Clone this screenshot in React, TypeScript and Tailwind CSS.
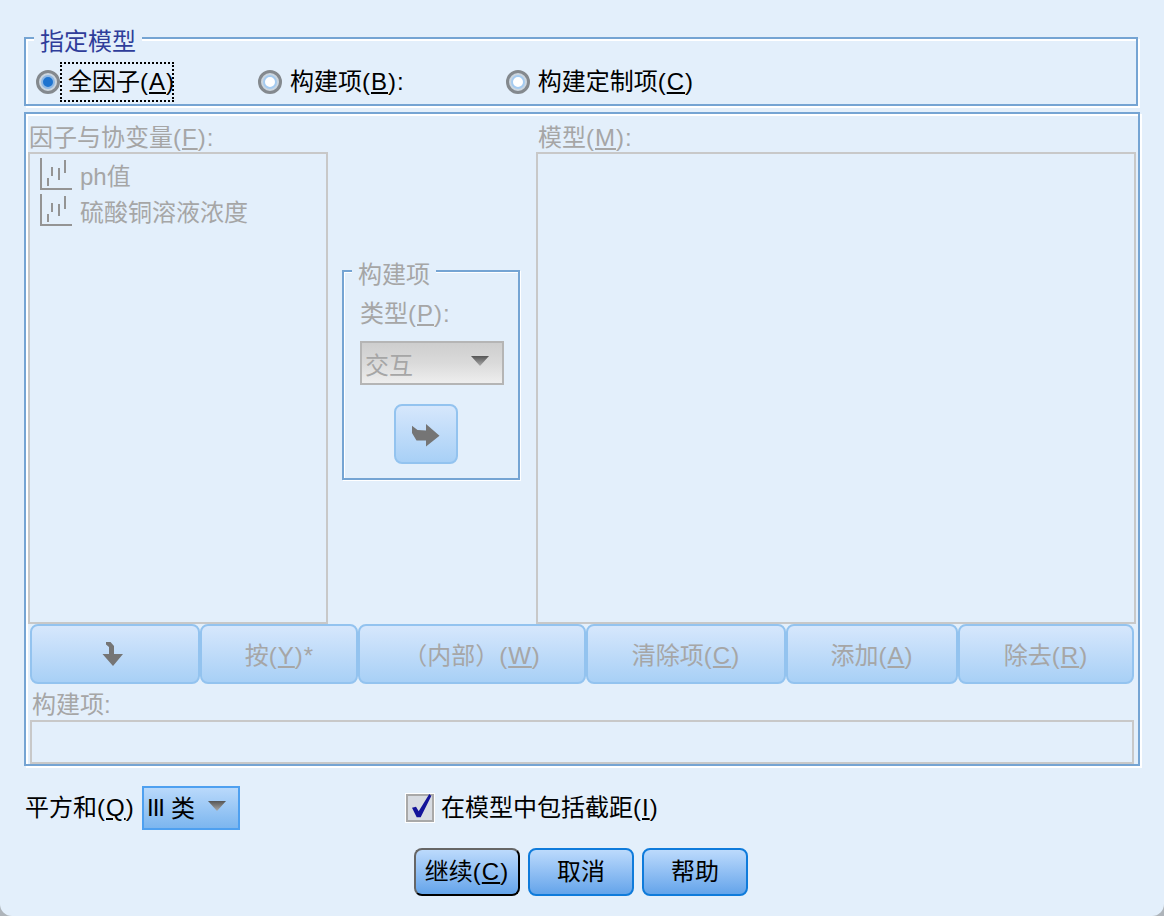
import type { ReactNode } from 'react';

const FONT = "font-['Liberation_Sans','Noto_Sans_CJK_SC',sans-serif]";

// mnemonic label, e.g. 全因子(A)
const Mn = ({ k }: { k: string }) => (
  <span className="tracking-[1px]">
    (<u>{k}</u>)
  </span>
);

const Radio = ({ checked }: { checked?: boolean }) => (
  <div className="flex h-6 w-6 shrink-0 items-center justify-center rounded-full border-[3px] border-[#84898e] bg-[#ccd6df]">
    <div className={`h-[14px] w-[14px] rounded-full border-2 ${checked ? 'border-[#8fb8e4] bg-[#1f74cf]' : 'border-[#a5cbf0] bg-white'}`} />
  </div>
);

const ScaleIcon = () => (
  <svg width="32" height="32" viewBox="0 0 32 32" className="shrink-0" fill="#949494">
    <rect x="0" y="0" width="2" height="32" />
    <rect x="0" y="30" width="32" height="2" />
    <rect x="7" y="20" width="2" height="8" />
    <rect x="11" y="9" width="2" height="9" />
    <rect x="18" y="10" width="2" height="12" />
    <rect x="24" y="2" width="2" height="13" />
  </svg>
);

const ArrowRight = () => (
  <svg width="36" height="36" viewBox="0 0 36 36" fill="#757575" className="mt-2">
    <path d="M4 5.7 L9.5 10 L18 10.5 V4 L31.5 15.7 L18 26.5 V20.5 H8.5 L4 13 Z" />
  </svg>
);

const ArrowDown = () => (
  <svg width="36" height="36" viewBox="0 0 36 36" fill="#757575" className="-ml-[2px]">
    <path d="M10 6 H14.5 L18 10 V18 H27 L17 30 L6.5 18 H13 V11 L10 8.5 Z" />
  </svg>
);

const Caret = () => (
  <svg width="18" height="10" viewBox="0 0 18 10">
    <defs>
      <linearGradient id="caret" x1="0" y1="0" x2="0" y2="1">
        <stop offset="0" stopColor="#555" />
        <stop offset="1" stopColor="#aaa" />
      </linearGradient>
    </defs>
    <path d="M0 0 H18 L9 10 Z" fill="url(#caret)" />
  </svg>
);

const ToolButton = ({ w, children }: { w: string; children: ReactNode }) => (
  <div className={`flex h-[60px] items-center justify-center rounded-lg border-2 border-[#93c3ef] bg-linear-to-b from-[#d6e7fc] to-[#a8d0f6] text-[#a6a6a6] ${w}`}>
    {children}
  </div>
);

const DialogButton = ({ children, primary }: { children: ReactNode; primary?: boolean }) => (
  <div
    className={`flex h-12 w-[106px] items-center justify-center rounded-lg border-2 bg-linear-to-b from-[#bcdafc] to-[#64a4ea] ${
      primary ? 'border-[#666] border-b-black border-r-black' : 'border-[#0f7bdb]'
    }`}
  >
    {children}
  </div>
);

export default function App() {
  return (
    <div className={`h-[916px] w-[1164px] overflow-hidden bg-[#aeb4ba] text-2xl leading-none text-black ${FONT}`}>
      <div className="h-full rounded-b-[12px] bg-[#e3effb] px-6 pt-[37px]">
        {/* 指定模型 */}
        <div className="relative flex h-[69px] w-[1114px] items-center border-2 border-[#75a4d3] pl-[10px] pt-[20px] shadow-[2px_2px_0_#fff,inset_2px_2px_0_#fff]">
          <div className="absolute -top-[9px] left-[8px] bg-[#e3effb] px-[6px] text-[#2f3d9a]">指定模型</div>
          <Radio checked />
          <div className="flex h-10 w-[114px] items-center whitespace-nowrap border-2 border-dotted border-black pl-[6px]">
            全因子
            <Mn k="A" />
          </div>
          <div className="ml-[84px]">
            <Radio />
          </div>
          <div className="ml-2 whitespace-nowrap">
            构建项
            <Mn k="B" />:
          </div>
          <div className="ml-[102px]">
            <Radio />
          </div>
          <div className="ml-2 whitespace-nowrap">
            构建定制项
            <Mn k="C" />
          </div>
        </div>

        {/* 构建项 disabled panel */}
        <div className="mt-[6px] h-[654px] w-[1116px] border-2 border-[#75a4d3] pl-[2px] pt-[12px] text-[#a6a6a6] shadow-[2px_2px_0_#fff,inset_2px_2px_0_#fff]">
          <div className="flex">
            <div className="w-[300px]">
              <div className="ml-[1px] h-[26px]">
                因子与协变量
                <Mn k="F" />:
              </div>
              <div className="flex h-[472px] flex-col gap-1 border-2 border-[#c8c8c8] pl-[10px] pt-[4px]">
                <div className="flex items-center gap-2">
                  <ScaleIcon />
                  <span className="mt-[6px]">ph值</span>
                </div>
                <div className="flex items-center gap-2">
                  <ScaleIcon />
                  <span className="mt-[6px]">硫酸铜溶液浓度</span>
                </div>
              </div>
            </div>

            <div className="w-[208px] pl-[14px] pt-[144px]">
              <div className="relative h-[210px] w-[178px] border-2 border-[#75a4d3] pl-4 pt-[30px] shadow-[1px_1px_0_#fff,inset_1px_1px_0_#fff]">
                <div className="absolute -top-[9px] left-[8px] bg-[#e3effb] px-[6px]">构建项</div>
                <div>
                  类型
                  <Mn k="P" />:
                </div>
                <div className="mt-[15px] flex h-[44px] w-[144px] items-center justify-between border-2 border-[#b5b5b5] bg-linear-to-b from-[#cecece] via-[#dadada] to-[#eeeeee] px-[3px]">
                  <span className="mt-[6px]">交互</span>
                  <span className="mb-[4px] mr-[10px]">
                    <Caret />
                  </span>
                </div>
                <div className="ml-[34px] mt-[19px] flex h-[60px] w-[64px] items-center justify-center rounded-lg border-2 border-[#93c3ef] bg-linear-to-b from-[#d6e7fc] to-[#a8d0f6]">
                  <ArrowRight />
                </div>
              </div>
            </div>

            <div className="w-[600px]">
              <div className="ml-[2px] h-[26px]">
                模型
                <Mn k="M" />:
              </div>
              <div className="h-[472px] border-2 border-[#c8c8c8]" />
            </div>
          </div>

          <div className="flex pl-[2px]">
            <ToolButton w="w-[170px]">
              <ArrowDown />
            </ToolButton>
            <ToolButton w="w-[158px]">
              <div className="pt-[4px]">
                按<Mn k="Y" />*
              </div>
            </ToolButton>
            <ToolButton w="w-[228px]">
              <div className="pt-[4px]">
                （内部）
                <Mn k="W" />
              </div>
            </ToolButton>
            <ToolButton w="w-[200px]">
              <div className="pt-[4px]">
                清除项
                <Mn k="C" />
              </div>
            </ToolButton>
            <ToolButton w="w-[172px]">
              <div className="pt-[4px]">
                添加
                <Mn k="A" />
              </div>
            </ToolButton>
            <ToolButton w="w-[176px]">
              <div className="pt-[4px]">
                除去
                <Mn k="R" />
              </div>
            </ToolButton>
          </div>
          <div className="ml-[4px] mt-[9px] h-[27px]">构建项:</div>
          <div className="ml-[2px] h-[44px] w-[1104px] border-2 border-[#c8c8c8]" />
        </div>

        {/* 平方和 + intercept */}
        <div className="mt-[20px] flex h-[44px] items-center">
          <div className="ml-[1px] w-[117px] whitespace-nowrap">
            平方和
            <Mn k="Q" />
          </div>
          <div className="flex h-[44px] w-[98px] items-center border-2 border-[#4ea0f0] bg-linear-to-b from-[#b9d9fb] to-[#7cb6ef] pl-[3px]">
            <span className="tracking-[-1px]">III</span>
            <span className="ml-[7px] mt-[2px]">类</span>
            <span className="mb-[4px] ml-[13px]">
              <Caret />
            </span>
          </div>
          <div className="ml-[166px] flex items-center">
            <div className="flex h-[28px] w-[28px] items-center justify-center border-2 border-[#a9a9a9] bg-[#d8dce2] shadow-[0_0_0_1px_#fff]">
              <svg width="24" height="24" viewBox="0 0 24 24" className="overflow-visible">
                <path d="M4 11.7 L8 10.7 L10.7 15.3 L21.3 -2 L23.3 0 L12.7 21.3 H8.7 Z" fill="#14149a" />
              </svg>
            </div>
            <div className="ml-[7px] whitespace-nowrap">
              在模型中包括截距
              <Mn k="I" />
            </div>
          </div>
        </div>

        {/* 继续 取消 帮助 */}
        <div className="mt-[18px] flex justify-center gap-2 pr-[2px]">
          <DialogButton primary>
            继续
            <Mn k="C" />
          </DialogButton>
          <DialogButton>取消</DialogButton>
          <DialogButton>帮助</DialogButton>
        </div>
      </div>
    </div>
  );
}
